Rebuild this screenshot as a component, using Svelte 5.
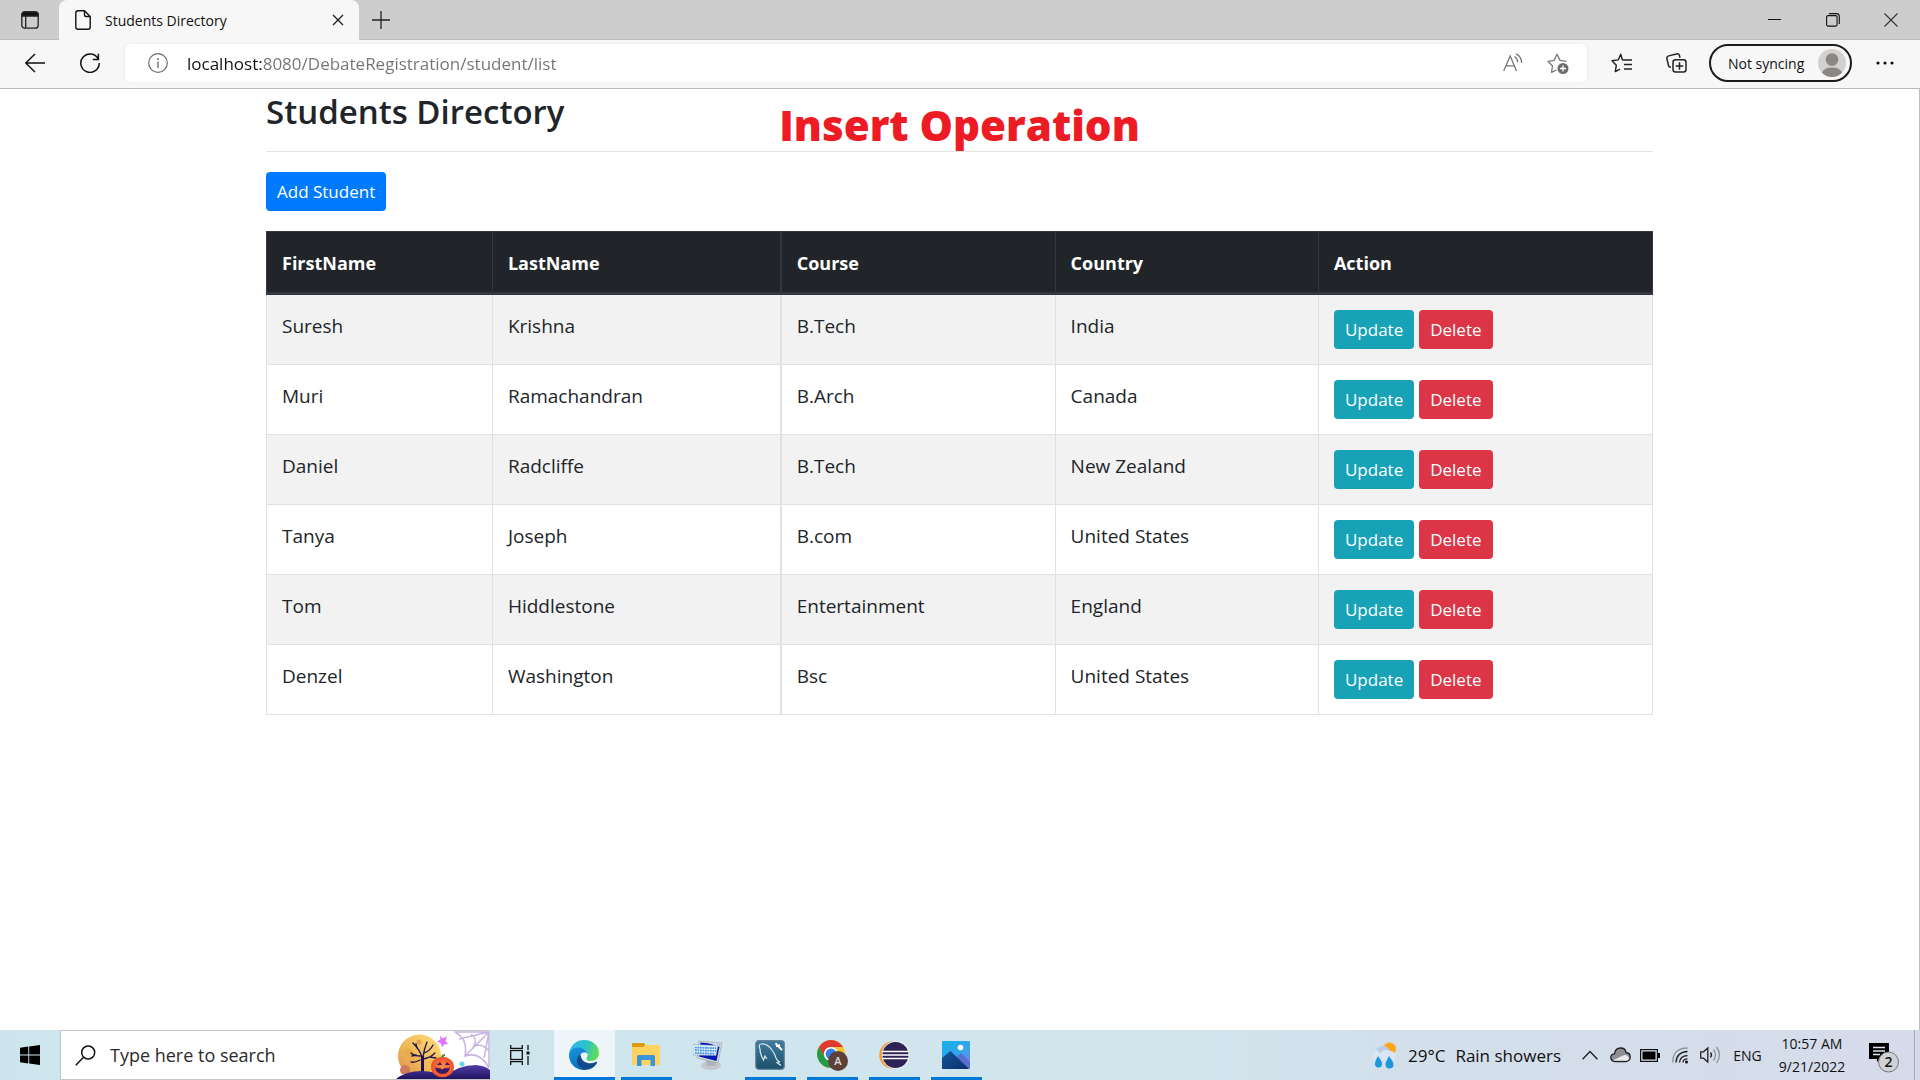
<script>
  const students = [
    { first: 'Suresh', last: 'Krishna', course: 'B.Tech', country: 'India' },
    { first: 'Muri', last: 'Ramachandran', course: 'B.Arch', country: 'Canada' },
    { first: 'Daniel', last: 'Radcliffe', course: 'B.Tech', country: 'New Zealand' },
    { first: 'Tanya', last: 'Joseph', course: 'B.com', country: 'United States' },
    { first: 'Tom', last: 'Hiddlestone', course: 'Entertainment', country: 'England' },
    { first: 'Denzel', last: 'Washington', course: 'Bsc', country: 'United States' }
  ];
  let url = $state('localhost:8080/DebateRegistration/student/list');
  let query = $state('');
</script>

<div class="screen">
  <header class="tabs">
    <button class="tab-menu" aria-label="Tab actions menu">
      <svg width="18" height="18" viewBox="0 0 18 18" fill="none" stroke="#222" stroke-width="1.3"><rect x=".8" y=".8" width="16.4" height="16.4" rx="3" /><path d="M1 3.5Q1 1 3.5 1h11Q17 1 17 3.5V5H1Z" fill="#111" /><path d="M4.7 5v12" /></svg>
    </button>
    <div class="tab">
      <svg width="16" height="20" viewBox="0 0 16 20" fill="none" stroke="#111" stroke-width="1.4"><path d="M3 .8h6.5L15.200 6.500V17q0 2.200-2.200 2.200H3Q.8 19.200.8 17V3Q.8.8 3 .8Z" /><path d="M9.500 1v4q0 1.500 1.500 1.500h4" /></svg>
      <span class="tab-title">Students Directory</span>
      <button class="tab-close" aria-label="Close tab"><svg width="12" height="12" viewBox="0 0 12 12" stroke="#222" stroke-width="1.400"><path d="M1 1l10 10M11 1L1 11" /></svg></button>
    </div>
    <button class="new-tab" aria-label="New tab"><svg width="18" height="18" viewBox="0 0 18 18" stroke="#222" stroke-width="1.300"><path d="M9 0v18M0 9h18" /></svg></button>
    <div class="window-buttons">
      <button aria-label="Minimize"><svg width="14" height="14" viewBox="0 0 14 14" stroke="#111"><path d="M0 6.500h13" /></svg></button>
      <button aria-label="Restore"><svg width="14" height="14" viewBox="0 0 14 14" fill="none" stroke="#111" stroke-width="1.100"><rect x=".6" y="2.600" width="10.500" height="10.500" rx="1.500" /><path d="M3 .6h7.500q2.800 0 2.800 2.800V11" /></svg></button>
      <button aria-label="Close"><svg width="14" height="14" viewBox="0 0 14 14" stroke="#333" stroke-width="1.100"><path d="M.5.5l13 13M13.500.5l-13 13" /></svg></button>
    </div>
  </header>

  <nav class="toolbar" aria-label="Browser toolbar">
    <button class="tool" aria-label="Back"><svg width="20" height="20" viewBox="0 0 20 20" fill="none" stroke="#111" stroke-width="1.400"><path d="M20 10H.8M10 1L.8 10l9.200 9" /></svg></button>
    <button class="tool" aria-label="Refresh"><svg width="20" height="20" viewBox="0 0 20 20" fill="none" stroke="#111" stroke-width="1.500"><path d="M18.200 6A9.200 9.200 0 1 0 19.200 10M18.400.8v5.600H12.800" /></svg></button>
    <div class="address">
      <svg width="20" height="20" viewBox="0 0 20 20" fill="none" stroke="#6b6b6b" stroke-width="1.200"><circle cx="10" cy="10" r="9.300" /><path d="M10 8.500V15" stroke-width="1.400" /><circle cx="10" cy="5.900" r="1" fill="#6b6b6b" stroke="none" /></svg>
      <input aria-label="Address" bind:value={url} spellcheck="false" />
      <button aria-label="Read aloud"><svg width="20" height="20" viewBox="0 0 20 20" fill="none" stroke="#777" stroke-width="1.300"><path d="M.7 18L7.200 3l6.300 15M3 12.800h8.300M11.500 3.500q3 1.700 3.200 5.700M13 .8q5.500 2.500 5.700 9.200" /></svg></button>
      <button aria-label="Add to favorites"><svg width="22" height="21" viewBox="0 0 22 21" fill="none" stroke="#777" stroke-width="1.300"><path d="M9.500 17l-5 2.300 1-6.300L1 8.300l6-.9L10 1.200l3 6.200 6.500.9" stroke-linejoin="round" /><circle cx="16" cy="15.500" r="5.500" fill="#6d6d6d" stroke="none" /><path d="M16 12.500v6M13 15.500h6" stroke="#fff" /></svg></button>
    </div>
    <button class="tool" aria-label="Favorites"><svg width="22" height="20" viewBox="0 0 22 20" fill="none" stroke="#222" stroke-width="1.400"><path d="M11.500 7.300L9.800 1.200 7.200 6.900 1 7.800l4.300 4.500-1 6.300L9 16.200M11.500 7H21M13 11.500h8M13 16h8" stroke-linejoin="round" /></svg></button>
    <button class="tool" aria-label="Collections"><svg width="21" height="20" viewBox="0 0 21 20" fill="none" stroke="#222" stroke-width="1.500"><path d="M5 14.300Q3 14.200 2.500 12.500L.9 5.800Q.5 3.500 2.700 2.900L10.500.9Q12.900.4 13.500 2.700l.5 2" /><rect x="7" y="6.800" width="13" height="12.300" rx="2.500" /><path d="M13.500 9.300v7.500M9.700 13h7.600" /></svg></button>
    <button class="profile"><span>Not syncing</span>
      <svg width="28" height="28" viewBox="0 0 28 28"><circle cx="14" cy="14" r="14" fill="#d3d0cd" /><circle cx="14" cy="10.500" r="6.300" fill="#8b8784" /><path d="M4 23.700Q6 18.500 14 18.500t10 5.200A14 14 0 0 1 4 23.700Z" fill="#8b8784" /></svg>
    </button>
    <button class="tool" aria-label="Settings and more"><svg width="18" height="4" viewBox="0 0 18 4" fill="#111"><circle cx="2" cy="2" r="1.600" /><circle cx="9" cy="2" r="1.600" /><circle cx="16" cy="2" r="1.600" /></svg></button>
  </nav>

  <main>
    <p class="caption">Insert Operation</p>
    <div class="container">
      <h1>Students Directory</h1>
      <hr />
      <button class="btn primary">Add Student</button>
      <table>
        <thead>
          <tr><th>FirstName</th><th>LastName</th><th>Course</th><th>Country</th><th>Action</th></tr>
        </thead>
        <tbody>
          {#each students as s}
            <tr>
              <td>{s.first}</td><td>{s.last}</td><td>{s.course}</td><td>{s.country}</td>
              <td><div class="actions"><button class="btn info">Update</button><button class="btn danger">Delete</button></div></td>
            </tr>
          {/each}
        </tbody>
      </table>
    </div>
  </main>

  <footer class="taskbar">
    <button class="start" aria-label="Start"><svg width="20" height="20" viewBox="0 0 20 20"><path d="M0 2.800L8.300 1.500V9.500H0ZM9.200 1.400L20 0V9.500H9.200ZM0 10.500H8.300V18.500L0 17.200ZM9.200 10.500H20V20L9.200 18.600Z" /></svg></button>
    <label class="search">
      <svg width="21" height="21" viewBox="0 0 21 21" fill="none" stroke="#111" stroke-width="1.500"><circle cx="13.200" cy="7.500" r="6.500" /><path d="M8.500 12.300L.8 20.200" /></svg>
      <input aria-label="Search" placeholder="Type here to search" bind:value={query} />
      <svg class="scene" width="94" height="48" viewBox="0 0 94 48">
        <defs>
          <linearGradient id="moon" x1="1" y1="0" x2="0" y2="1"><stop offset="0" stop-color="#ffe07c" /><stop offset=".6" stop-color="#efb451" /><stop offset="1" stop-color="#d98a55" /></linearGradient>
          <linearGradient id="hill" x1="0" y1="0" x2="0" y2="1"><stop offset="0" stop-color="#503fa8" /><stop offset="1" stop-color="#21135f" /></linearGradient>
          <radialGradient id="pumpkin"><stop offset="0" stop-color="#ff8a45" /><stop offset="1" stop-color="#f04f2b" /></radialGradient>
        </defs>
        <circle cx="23.500" cy="25" r="21.500" fill="url(#moon)" />
        <circle cx="23" cy="11" r="2.500" fill="#e3a348" /><circle cx="12" cy="22" r="4.500" fill="#e8ad4b" /><circle cx="9" cy="39" r="5" fill="#cf7a5c" /><circle cx="36" cy="32" r="3" fill="#f1b556" />
        <g fill="none" stroke="#1e1250" stroke-width="1.300" stroke-linecap="round"><path d="M26 27Q25 20 17 12M25 25Q18 25 15 22M21 17L20 13M27 26Q28 18 31 11M28 22Q34 20 37 14M27 28Q34 27 39 22M34 26L40 27M24 29Q18 32 15 31M20 24L16 25" /><path d="M26.500 26V42" stroke-width="3" /></g>
        <path d="M0 48Q10 40 26 40Q40 40 48 46Q62 34 80 34Q90 35 94 39V48Z" fill="url(#hill)" />
        <ellipse cx="46.500" cy="36" rx="11.500" ry="10.300" fill="url(#pumpkin)" /><path d="M46 27Q46 24 49 24" stroke="#5b8c2a" stroke-width="2" fill="none" />
        <path d="M41 34l3-3 2 3ZM49 34l2-3 3 3ZM39 36q2.500 2 5 1l2 1.500 3-1.500q3 1 5-1-1 7-7.500 7T39 36Z" fill="#3a1c66" />
        <path d="M44 4.500l2.500 3 4.500-2-1.500 4.500 2.500 3-4 .5-2 3-1-4-4-2 3.500-2Z" fill="#dd73fb" />
        <circle cx="66" cy="33" r="2.500" fill="#62d5e5" />
        <g fill="none" stroke="#c9b4df" stroke-width="1.500"><path d="M58 1H93V36M93 1L69 25M93 1L63 8M93 1L88 27M60 2Q72 8 69 25Q84 20 93 37M75 3Q82 8 78 15Q87 12 93 20" /></g>
      </svg>
    </label>
    <button class="task-view" aria-label="Task view"><svg width="20" height="20" viewBox="0 0 20 20" fill="none" stroke="#111" stroke-width="1.300"><path d="M.7 0v3.300h11.600V0M.7 20v-3.300h11.600V20M18 0v5M18 11v9" /><rect x=".7" y="5.500" width="11.600" height="9" /><path d="M16.500 6.500h3v3h-3Z" fill="#111" stroke="none" /></svg></button>

    <div class="apps">
      <button class="app active" aria-label="Microsoft Edge">
        <svg width="30" height="30" viewBox="0 0 30 30">
          <defs>
            <linearGradient id="ea" x1="0" x2="1" y1=".2" y2=".5"><stop offset="0" stop-color="#32b5ee" /><stop offset=".55" stop-color="#2bc3c6" /><stop offset="1" stop-color="#64dc50" /></linearGradient>
            <linearGradient id="eb" x1=".3" x2=".6" y1="0" y2="1"><stop offset="0" stop-color="#1595dc" /><stop offset="1" stop-color="#0a69bc" /></linearGradient>
          </defs>
          <path d="M.3 12.500C2 4.500 8 0 15 0c9 0 15 6 15 13 0 5-4 8-8.500 8-4 0-4.500-2-3.300-4C20 13 17 8 10.500 8 5 8 1.500 10.500.3 12.500Z" fill="url(#ea)" />
          <path d="M14 30C6 29.500 0 23 0 15 0 10 5 7.300 10 7.500c5.500.2 8.500 4 8.700 6.500-1-1.800-3.700-2.500-5.700-1-6 4.500-3 14.500 5 16.500Q16 30.200 14 30Z" fill="url(#eb)" />
          <path d="M11 14.500c-6 5-2.500 14.500 6 15.300 5 0 9-3 11-7 .3-1-.5-1.300-1.300-.8-6 3-14 .5-14.700-5.500Q11.800 15 11 14.500Z" fill="#114a8b" />
        </svg>
      </button>
      <button class="app open" aria-label="File Explorer">
        <svg width="28" height="26" viewBox="0 0 28 26"><path d="M0 2Q0 1 1 1H12l2 3v4H0Z" fill="#dc9b0b" /><path d="M0 5H11l2.500-2H27Q28 3 28 4V22Q28 23 27 23H1Q0 23 0 22Z" fill="#ffd35f" /><path d="M5 24V15Q5 13 7 13H21q2 0 2 2v9H18.500V18H9.500v6Z" fill="#3b94d8" /></svg>
      </button>
      <button class="app" aria-label="On-screen keyboard">
        <svg width="30" height="30" viewBox="0 0 30 30"><ellipse cx="18" cy="25.500" rx="10" ry="4.500" fill="#c4c8cd" /><path d="M13 20h9l1 6h-9Z" fill="#aeb4bc" /><path d="M6 1L29 3 25 23 4 18Z" fill="#d4d6dc" stroke="#9ba1aa" stroke-width=".6" /><path d="M7.500 2.500L27 4.500 23.500 21 6 16.500Z" fill="#0719b4" /><path d="M14 2.500L27 4.500 26.500 7Z" fill="#e4e8f5" /><path d="M0 4.500l25 1-2 10L0 15Z" fill="#ddecf8" stroke="#7d9cbc" stroke-width=".5" /><path d="M2 7.500l21 .7M2 10.200l21 .7M2 13l20 .8" stroke="#3d91d8" stroke-width="1.700" stroke-dasharray="1.800 .7" /></svg>
      </button>
      <button class="app open" aria-label="MySQL Workbench">
        <svg width="30" height="30" viewBox="0 0 30 30"><defs><linearGradient id="sql" x2="0" y2="1"><stop stop-color="#3e7ba0" /><stop offset="1" stop-color="#1d5069" /></linearGradient></defs><rect x=".7" y=".7" width="28.600" height="28.600" rx="3" fill="url(#sql)" stroke="#63869b" stroke-width="1.200" /><path d="M12 19l-2-3-1.500 4Q5 14 5 9 3 4.500 6 4q6-1 11 6 3 4 4 8 1 3 4 4l-3 .5 4 3" fill="none" stroke="#dbeaf0" stroke-width="1.200" /><path d="M21 3l1 3 3-1M23 6l4 4" stroke="#fff" stroke-width="2" fill="none" /></svg>
      </button>
      <button class="app open" aria-label="Google Chrome">
        <svg width="32" height="32" viewBox="0 0 32 32"><circle cx="15" cy="15" r="14" fill="#f6c231" /><path d="M2.900 8A14 14 0 0 1 27.100 8H15a7 7 0 0 0-6.500 10Z" fill="#e0392f" /><path d="M2.900 8A14 14 0 0 0 14 29l5-8.500A7 7 0 0 1 8.900 18.500Z" fill="#259b4a" /><circle cx="15" cy="15" r="7" fill="#fff" /><circle cx="15" cy="15" r="5.400" fill="#327fe8" /><circle cx="22" cy="22" r="10" fill="#5d4037" /><text x="22" y="26" text-anchor="middle" font-size="11" font-weight="600" fill="#ddd">A</text></svg>
      </button>
      <button class="app open" aria-label="Eclipse">
        <svg width="30" height="28" viewBox="0 0 30 28"><circle cx="14" cy="14" r="13.800" fill="#f3a044" /><circle cx="17" cy="14" r="14" fill="#eaf1f4" /><circle cx="16.500" cy="14" r="13" fill="#2c2255" /><path d="M3 10.500h27M3 14h27M3 17.500h27" stroke="#fff" stroke-width="1.500" /></svg>
      </button>
      <button class="app open" aria-label="Photos">
        <svg width="28" height="28" viewBox="0 0 28 28"><defs><linearGradient id="sky" x2="1" y2="1"><stop stop-color="#13b0e9" /><stop offset=".6" stop-color="#3aa2eb" /><stop offset="1" stop-color="#8a75dc" /></linearGradient><linearGradient id="mt" x2="1" y2="1"><stop stop-color="#12569c" /><stop offset="1" stop-color="#0d306b" /></linearGradient></defs><rect width="28" height="28" rx="1" fill="url(#sky)" /><path d="M14 17l5-5 9 9v6H22Z" fill="#5a6cce" /><path d="M0 17L8.500 10 27 28H1Q0 28 0 27Z" fill="url(#mt)" /><circle cx="18.500" cy="6.500" r="2.800" fill="#fff" /></svg>
      </button>
    </div>

    <div class="tray">
      <button class="weather">
        <svg width="27" height="27" viewBox="0 0 27 27"><circle cx="18.500" cy="7" r="6.500" fill="#ffa51c" /><path d="M6 19a5.800 5.800 0 0 1-.5-11Q9 2 15 5q3 1.500 4 4 5 0 5.500 4.500Q24 19 19 19Z" fill="#dbe6f5" /><path d="M5 8Q9 2 15 5q3 1.500 4 4Q12 6 9 12 7 8 5 8Z" fill="#b9cde8" /><path d="M7 14q4 5 4 8a3.500 3.500 0 0 1-7 0q0-3 3-8ZM18 14q4.500 6 4.500 8.500a4 4 0 0 1-8 0Q14.500 20 18 14Z" fill="#1e97dd" /></svg>
        <span>29°C</span><span>Rain showers</span>
      </button>
      <button class="icon" aria-label="Show hidden icons"><svg width="16" height="10" viewBox="0 0 16 10" fill="none" stroke="#222" stroke-width="1.400"><path d="M.6 9.300L8 1.500l7.400 7.800" /></svg></button>
      <button class="icon" aria-label="OneDrive"><svg width="21" height="16" viewBox="0 0 21 16"><path d="M5 14.500Q.8 14 .8 10.500T4.500 6.800Q5.500 1 10.500 1T16 5.500Q20.200 6 20.200 10T16 14.500Z" fill="#8f9094" stroke="#222" stroke-width="1.300" /><path d="M3 13.300L13 8.500q4-1.500 6 2-.2 3.300-3 3.300H5Z" fill="#e9e9e9" /></svg></button>
      <button class="icon" aria-label="Battery"><svg width="20" height="13" viewBox="0 0 20 13"><rect x=".6" y=".6" width="16.800" height="11.800" fill="none" stroke="#111" stroke-width="1.200" /><path d="M2.500 2.500h13v8h-13ZM18 4h2v5h-2Z" /></svg></button>
      <button class="icon" aria-label="Network"><svg width="17" height="17" viewBox="0 0 17 17" fill="none" stroke="#222" stroke-width="1.300"><path d="M.7 15.500Q.7 1 15.500 1" stroke="#8d929b" /><path d="M4 15.500Q4.500 5 15.500 4.500M7.500 15.500Q8 9 15.500 8.500M11 15.500q0-3.500 4.500-3.700" /><circle cx="14.500" cy="15" r="1.500" fill="#111" stroke="none" /></svg></button>
      <button class="icon" aria-label="Volume"><svg width="21" height="18" viewBox="0 0 21 18" fill="none" stroke="#222" stroke-width="1.300"><path d="M.7 5.800H3.500L7.800 2V16L3.500 12.200H.7ZM10.500 6.500q2 2.500 0 5" /><path d="M13.500 3.500q4 5.500 0 11M16.500 1q6 8 0 16" stroke="#8d929b" /></svg></button>
      <button class="lang">ENG</button>
      <button class="clock"><span>10:57 AM</span><span>9/21/2022</span></button>
      <button class="notify" aria-label="2 new notifications">
        <svg width="30" height="30" viewBox="0 0 30 30"><path d="M0 0H20V16H11L8 19V16H0Z" fill="#000" /><path d="M4 4.500H16M4 8H16M4 11.500H11" stroke="#dfe3ee" stroke-width="1.300" /><circle cx="19.500" cy="19" r="10" fill="#cfd1d5" stroke="#777" /><text x="19.500" y="24" text-anchor="middle" font-size="14" font-weight="600" fill="#111">2</text></svg>
      </button>
      <button class="desktop" aria-label="Show desktop"></button>
    </div>
  </footer>
</div>

<style>
  :global(body) { margin: 0; background: #fff; }
  .screen {
    min-height: 100vh;
    display: flex;
    flex-direction: column;
    font-family: "Open Sans", "Noto Sans", sans-serif;
    color: #212529;
  }
  .screen :global(*) { box-sizing: border-box; }
  svg { display: block; flex: none; }
  button, input { font: inherit; color: inherit; border: 0; background: none; padding: 0; margin: 0; }
  button { display: flex; align-items: center; justify-content: center; flex: none; }
  input { outline: 0; min-width: 0; }

  .tabs { display: flex; height: 40px; background: #cdcdcd; border-bottom: 1px solid #bdbdbd; }
  .tab-menu { width: 59px; }
  .tab {
    display: flex;
    align-items: center;
    gap: 14px;
    width: 300px;
    height: 40px;
    padding: 0 14px 0 16px;
    background: #f7f7f7;
    border-radius: 8px 8px 0 0;
    font-size: 14px;
    color: #111;
  }
  .tab-title { flex: 1; white-space: nowrap; }
  .tab-close { width: 14px; }
  .new-tab { width: 44px; }
  .window-buttons { display: flex; margin-left: auto; }
  .window-buttons button { width: 58px; }

  .toolbar {
    display: flex;
    align-items: center;
    height: 49px;
    padding: 0 8px 2px 7px;
    background: #f7f7f7;
    border-bottom: 1px solid #b9b9b9;
  }
  .tool { width: 55px; height: 38px; }
  .address {
    flex: 1;
    display: flex;
    align-items: center;
    height: 38px;
    margin: 0 7px 0 8px;
    padding: 0 18px 0 23px;
    gap: 24px;
    background: #fff;
    border-radius: 6px;
    box-shadow: 0 0 3px #e6e6e6;
  }
  .address input {
    flex: 1;
    margin-left: -5px;
    font-size: 17px;
    height: 30px;
    color: transparent;
    caret-color: #111;
    background: linear-gradient(to right, #111 76px, #737373 76px);
    background-clip: text;
    -webkit-background-clip: text;
  }
  .profile {
    height: 38px;
    width: 143px;
    margin: 0 5px;
    padding: 0 4px 0 17px;
    justify-content: space-between;
    border: 2px solid #1b1b1b;
    border-radius: 19px;
    font-size: 14px;
    color: #111;
    white-space: nowrap;
  }

  main { flex: 1; position: relative; border-right: 1px solid #bdbdbd; }
  .container { max-width: 1387px; margin: 0 auto; }
  .caption {
    position: absolute;
    top: 11px;
    left: 0;
    right: 0;
    margin: 0;
    text-align: center;
    font-size: 42px;
    line-height: 50px;
    font-weight: 800;
    color: #ed1c24;
    pointer-events: none;
  }
  h1 { margin: 0; padding-top: 2px; font-size: 33px; line-height: 42px; font-weight: 600; }
  hr { margin: 18px 0 20px; border: 0; border-top: 1px solid #e3e3e3; }
  .btn { height: 39px; padding: 0 11px; border-radius: 4px; font-size: 17px; color: #fff; white-space: nowrap; }
  .primary { background: #007bff; }
  .info { background: #17a2b8; }
  .danger { background: #dc3545; }
  table {
    width: 100%;
    margin: 20px 0;
    border-collapse: collapse;
    table-layout: fixed;
    font-size: 19px;
    line-height: 30px;
  }
  th, td { padding: 16px 15px 14px; border: 1px solid #dee2e6; text-align: left; vertical-align: top; }
  th { background: #212529; color: #fff; font-size: 18px; font-weight: 700; border-color: #32383e; border-bottom-width: 3px; }
  th:nth-child(1) { width: 16.3%; }
  th:nth-child(2) { width: 20.8%; }
  th:nth-child(3) { width: 19.8%; }
  th:nth-child(4) { width: 19%; }
  th:nth-child(2), td:nth-child(2) { border-right-width: 2px; }
  td:last-child { padding-top: 15px; padding-bottom: 15px; }
  tbody tr:nth-child(odd) { background: #f2f2f2; }
  .actions { display: flex; gap: 5px; }

  .taskbar {
    display: flex;
    height: 50px;
    background: linear-gradient(to right, #cde6ee, #d1e5ed 60%, #d3dfeb 75%, #d6dbea);
    color: #111;
  }
  .start { width: 60px; }
  .search {
    display: flex;
    align-items: center;
    width: 430px;
    padding-left: 14px;
    gap: 14px;
    background: #fff;
    border: 1px solid #c4c4c4;
    border-right: 0;
  }
  .search input { flex: 1; font-size: 18px; }
  .search input::placeholder { color: #2b2b2b; opacity: 1; }
  .task-view { width: 60px; }
  .apps { display: flex; gap: 11px; margin-left: 4px; }
  .app { width: 51px; border-bottom: 3px solid transparent; padding: 3px 1px 0 0; }
  .app.active { width: 61px; margin-right: -5px; background: #edf5f8; border-color: #0078d7; }
  .app.open { border-color: #0078d7; }
  .tray { display: flex; margin-left: auto; }
  .weather { gap: 10px; margin-right: 14px; font-size: 17px; white-space: nowrap; }
  .icon { width: 30px; }
  .lang { width: 45px; font-size: 14px; }
  .clock { width: 84px; flex-direction: column; font-size: 14px; line-height: 23px; }
  .notify { width: 60px; padding-top: 5px; }
  .desktop { width: 6px; border-left: 1px solid #a5abb8; }
</style>
